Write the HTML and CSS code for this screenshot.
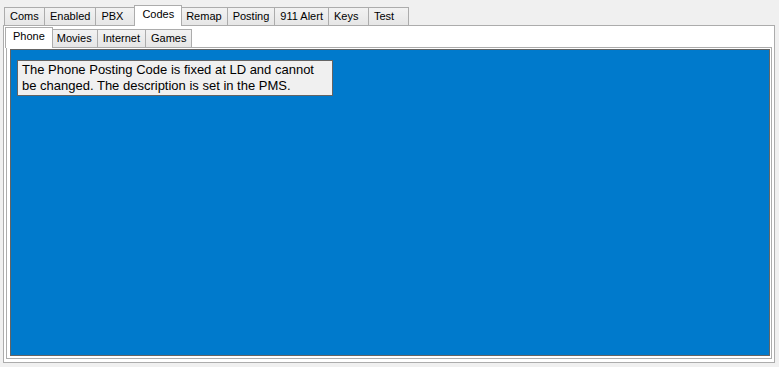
FILE: index.html
```html
<!DOCTYPE html>
<html lang="en">
<head>
    <meta charset="UTF-8">
    <title>Codes</title>
    <link rel="stylesheet" href="styles.css">
</head>
<body>
    <div class="tab-control outer">
        <div class="tab-strip">
            <div class="tab">Coms</div>
            <div class="tab">Enabled</div>
            <div class="tab">PBX</div>
            <div class="tab selected">Codes</div>
            <div class="tab">Remap</div>
            <div class="tab">Posting</div>
            <div class="tab">911 Alert</div>
            <div class="tab">Keys</div>
            <div class="tab">Test</div>
        </div>
        <div class="tab-page outer-page">
            <div class="tab-control inner">
                <div class="tab-strip">
                    <div class="tab selected">Phone</div>
                    <div class="tab">Movies</div>
                    <div class="tab">Internet</div>
                    <div class="tab">Games</div>
                </div>
                <div class="tab-page inner-page">
                    <div class="blue-panel">
                        <div class="note">The Phone Posting Code is fixed at LD and cannot be changed. The description is set in the PMS.</div>
                    </div>
                </div>
            </div>
        </div>
    </div>
</body>
</html>
```

FILE: styles.css
```css
body {
    margin: 0;
    background-color: #f0f0f0;
    font-family: "Liberation Sans", Arial, sans-serif;
    font-size: 11px;
    color: #000;
}

.tab-control {
    display: flex;
    flex-direction: column;
}

.tab-control.outer {
    margin: 5px 4px 0 3px;
    height: 358px;
}

.tab-strip {
    display: flex;
    align-items: flex-end;
    height: 20px;
    padding-left: 1px;
}

.tab {
    position: relative;
    box-sizing: border-box;
    height: 18px;
    min-width: 41px;
    padding: 2px 5px 0 5px;
    margin-left: -1px;
    border: 1px solid #acacac;
    border-bottom: none;
    background: linear-gradient(#f2f2f2, #e6e6e6);
    white-space: nowrap;
}

.tab:first-child {
    margin-left: 0;
}

.tab.selected {
    z-index: 1;
    height: 21px;
    margin: 0 -2px -1px -2px;
    padding: 2px 7px 0 7px;
    background: #fff;
}

.tab.selected + .tab {
    margin-left: 0;
}

.tab-page {
    flex: 1;
    display: flex;
    flex-direction: column;
    border: 1px solid #acacac;
    background-color: #fff;
}

.outer-page {
    padding: 1px 2px 3px 2px;
}

.tab-control.inner {
    flex: 1;
}

.inner-page {
    padding: 1px 1px 2px 3px;
}

.blue-panel {
    flex: 1;
    border: 1px solid #646464;
    background-color: #007acc;
    padding: 10px 6px;
}

.note {
    box-sizing: border-box;
    width: 316px;
    height: 36px;
    padding: 1px 4px;
    border: 1px solid #646464;
    background-color: #f0f0f0;
    font-size: 13px;
    line-height: 16px;
}
```
